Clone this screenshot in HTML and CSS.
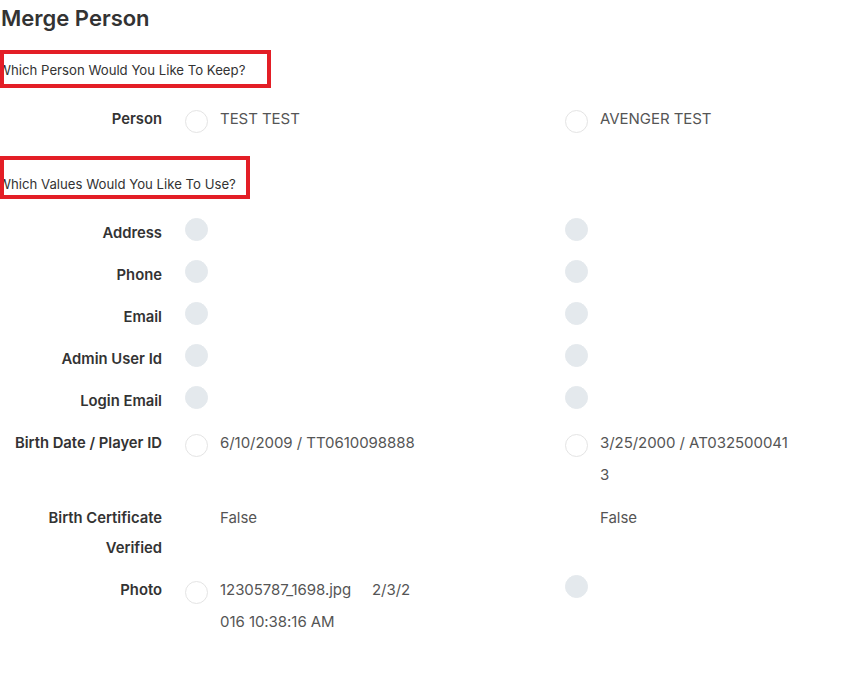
FILE: index.html
```html
<!DOCTYPE html>
<html lang="en">
<head>
<meta charset="UTF-8" />
<meta name="viewport" content="width=device-width, initial-scale=1" />
<title>Merge Person</title>
<link rel="stylesheet" href="styles.css">
</head>
<body>
<div class="merge">
  <h1 class="title">Merge Person</h1>

  <h2 class="section section-keep">Which Person Would You Like To Keep?</h2>
  <div class="merge-row">
    <div class="merge-label">Person</div>
    <label class="option"><input type="radio" name="keep" /><span class="value">TEST TEST</span></label>
    <label class="option"><input type="radio" name="keep" /><span class="value">AVENGER TEST</span></label>
  </div>

  <h2 class="section section-values">Which Values Would You Like To Use?</h2>
  <div class="merge-row">
    <div class="merge-label">Address</div>
    <label class="option"><input type="radio" name="address" disabled /></label>
    <label class="option"><input type="radio" name="address" disabled /></label>
  </div>
  <div class="merge-row">
    <div class="merge-label">Phone</div>
    <label class="option"><input type="radio" name="phone" disabled /></label>
    <label class="option"><input type="radio" name="phone" disabled /></label>
  </div>
  <div class="merge-row">
    <div class="merge-label">Email</div>
    <label class="option"><input type="radio" name="email" disabled /></label>
    <label class="option"><input type="radio" name="email" disabled /></label>
  </div>
  <div class="merge-row">
    <div class="merge-label">Admin User Id</div>
    <label class="option"><input type="radio" name="adminId" disabled /></label>
    <label class="option"><input type="radio" name="adminId" disabled /></label>
  </div>
  <div class="merge-row">
    <div class="merge-label">Login Email</div>
    <label class="option"><input type="radio" name="loginEmail" disabled /></label>
    <label class="option"><input type="radio" name="loginEmail" disabled /></label>
  </div>
  <div class="merge-row">
    <div class="merge-label">Birth Date / Player ID</div>
    <label class="option"><input type="radio" name="birthDate" /><span class="value">6/10/2009 / TT0610098888</span></label>
    <label class="option"><input type="radio" name="birthDate" /><span class="value">3/25/2000 / AT0325000413</span></label>
  </div>
  <div class="merge-row">
    <div class="merge-label">Birth Certificate Verified</div>
    <div class="option no-radio"><span class="value">False</span></div>
    <div class="option no-radio"><span class="value">False</span></div>
  </div>
  <div class="merge-row">
    <div class="merge-label">Photo</div>
    <label class="option"><input type="radio" name="photo" /><span class="value">12305787_1698.jpg&nbsp;&nbsp;&nbsp;&nbsp;&nbsp;2/3/2016 10:38:16 AM</span></label>
    <label class="option"><input type="radio" name="photo" disabled /></label>
  </div>
</div>
</body>
</html>
```
FILE: styles.css
```css
/* Reset & Basic */
*,
*::before,
*::after {
  box-sizing: border-box;
}
body {
  margin: 0;
  background: #fff;
  font-family: 'Inter', 'Liberation Sans', sans-serif;
  color: #333;
}
.merge {
  width: 850px;
}
.title {
  margin: 0 0 0 1px;
  padding-top: 4px;
  font-size: 22px;
  font-weight: 600;
  line-height: 28px;
  color: #333;
}

/* Section headings with the red highlight box */
.section {
  position: relative;
  margin: 0 0 23px;
  text-indent: -2px;
  font-size: 13.2px;
  font-weight: 400;
  line-height: 20px;
  color: #333;
}
.section::after {
  content: '';
  position: absolute;
  left: 0;
  border: 4px solid #e31e26;
}
.section-keep {
  margin-top: 28px;
}
.section-keep::after {
  top: -10px;
  width: 271px;
  height: 38px;
}
.section-values {
  margin-top: 39px;
}
.section-values::after {
  top: -18px;
  width: 250px;
  height: 43px;
}

/* Rows */
.merge-row {
  display: grid;
  grid-template-columns: 185px 380px 1fr;
  align-items: start;
  padding-top: 1px;
  margin-bottom: 11px;
}
.merge-label {
  padding-right: 23px;
  text-align: right;
  font-size: 14.8px;
  font-weight: 600;
  line-height: 30px;
  color: #333;
}
.option {
  display: flex;
  align-items: flex-start;
  gap: 12px;
}
.option.no-radio {
  padding-left: 35px;
}
.option input {
  appearance: none;
  -webkit-appearance: none;
  flex: none;
  width: 23px;
  height: 23px;
  margin: 6px 0 0;
  border: 1px solid #e4e4e4;
  border-radius: 50%;
  background: #fff;
  cursor: pointer;
}
.option input:checked {
  border: 7px solid #3b8fd9;
}
.option input:disabled {
  margin-top: 0;
  border-color: #e4e9ed;
  background: #e4e9ed;
  cursor: default;
}
.value {
  max-width: 195px;
  margin-top: -1px;
  font-size: 15px;
  letter-spacing: -0.05px;
  line-height: 32px;
  color: #555;
  word-break: break-all;
}
```
